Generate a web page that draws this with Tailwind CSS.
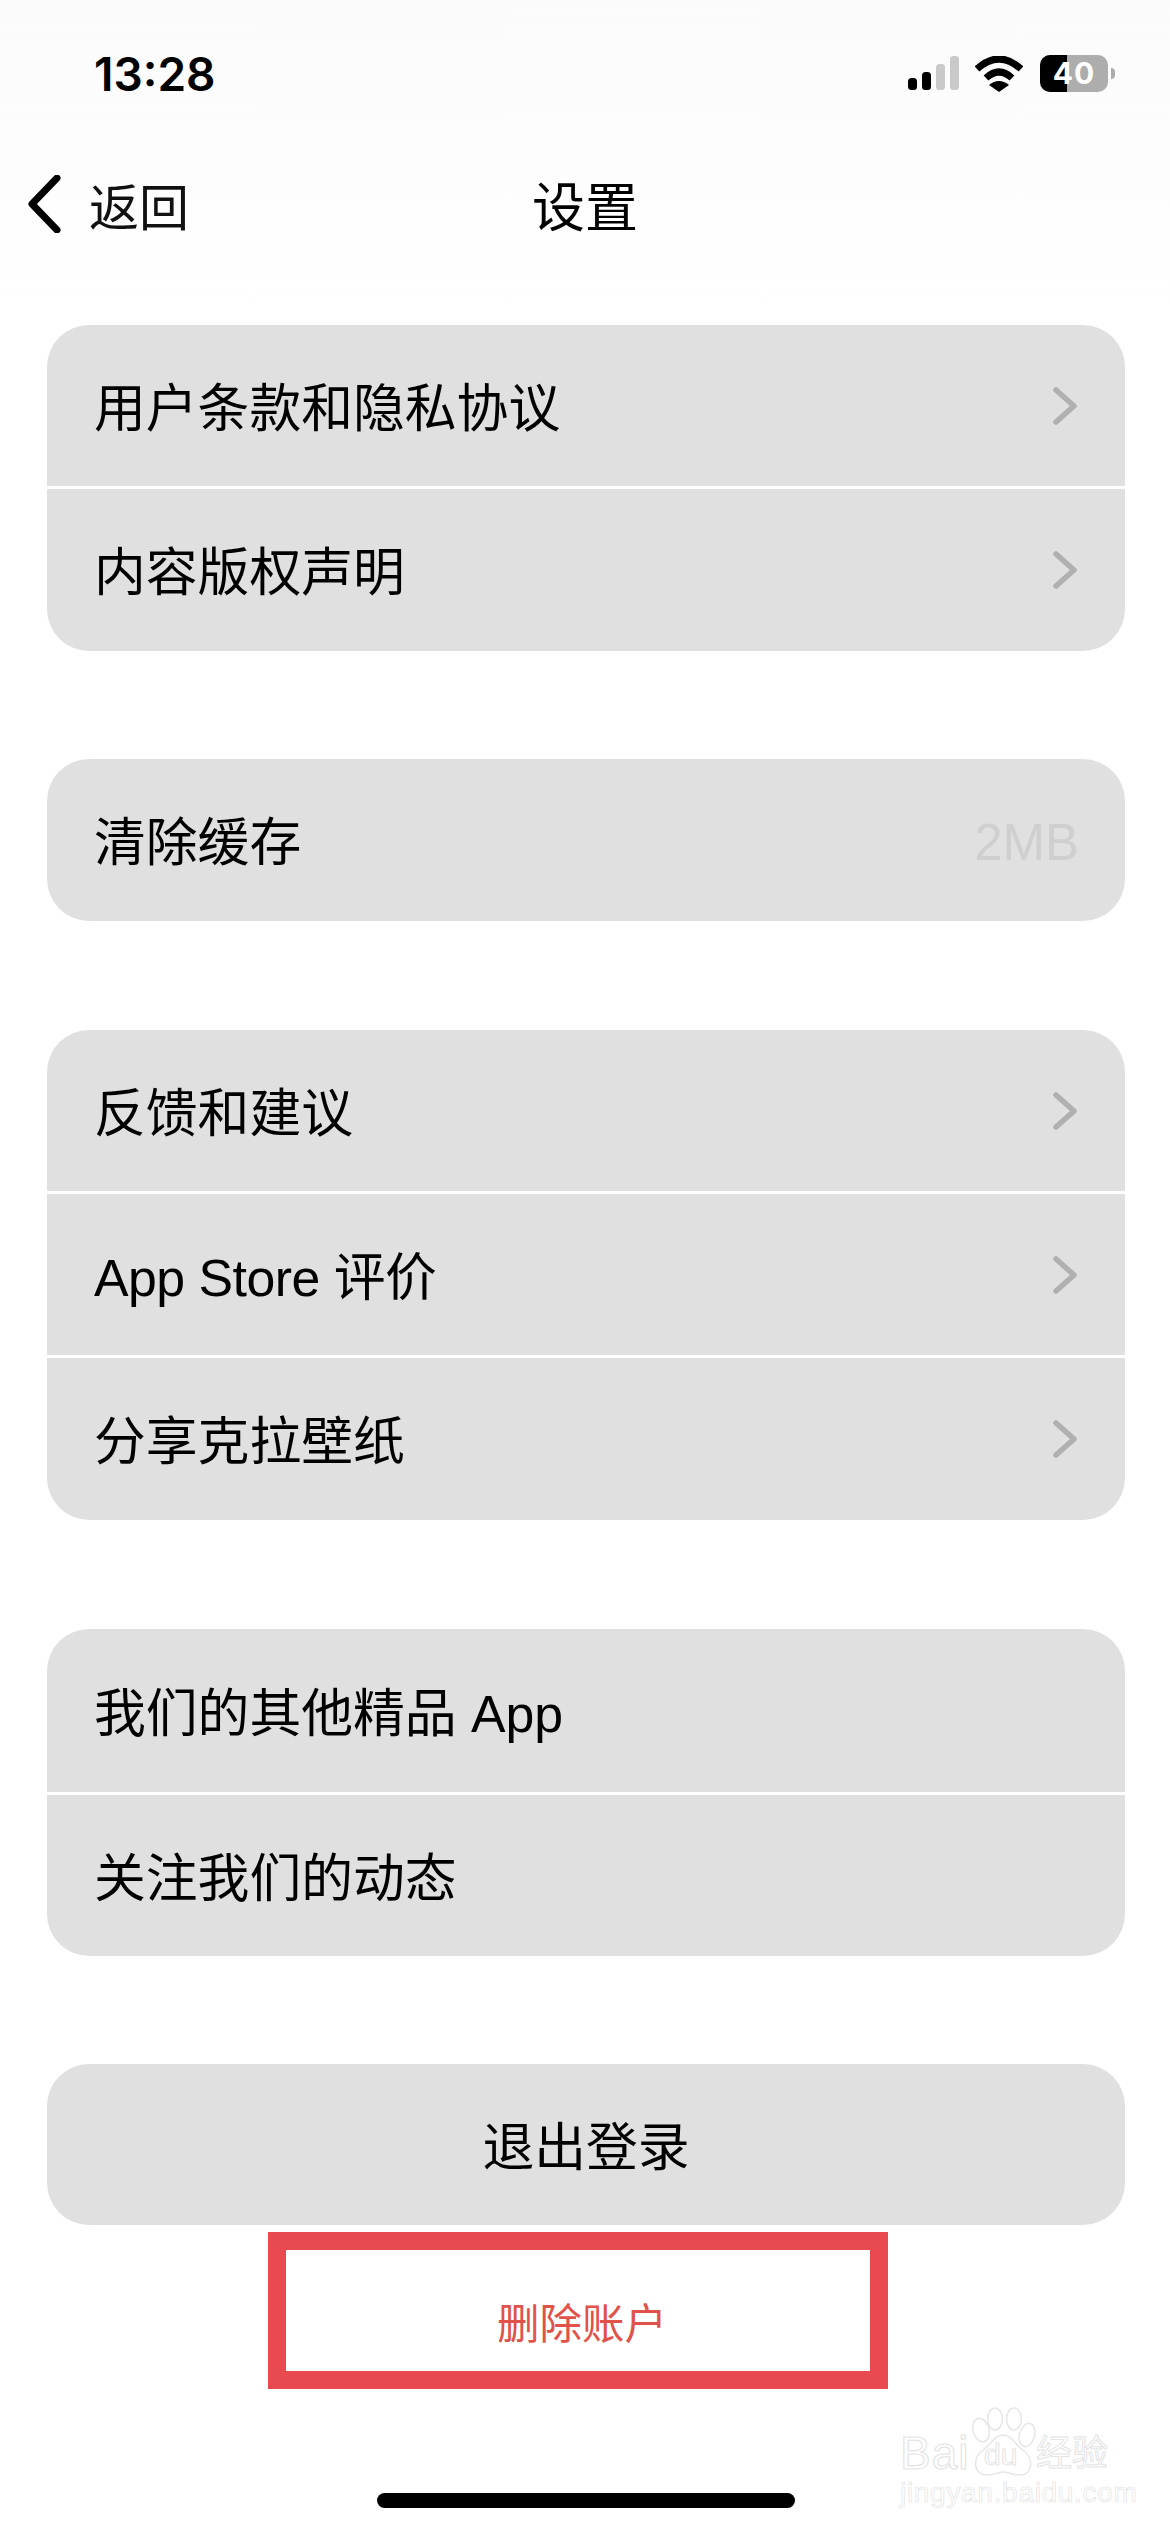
<!doctype html>
<html lang="zh-CN">
<head>
<meta charset="utf-8">
<script src="https://cdn.jsdelivr.net/npm/@tailwindcss/browser@4"></script>
</head>
<body class="bg-white">
<div class="relative w-[1170px] h-[2532px] overflow-hidden bg-white text-black font-['Liberation_Sans','Noto_Sans_CJK_SC',sans-serif]">
  <div class="h-[325px] bg-gradient-to-b from-[#fbfbfb] to-white">
    <div class="h-[147px] pl-[94px] pr-[55px] pt-[47px] flex items-start justify-between">
      <span class="text-[46px] leading-[54px] font-semibold font-['Inter',sans-serif]">13:28</span>
      <div class="flex items-center pt-[8px]">
        <svg width="52" height="36" viewBox="0 0 52 36" class="mr-[16px]">
          <rect x="1" y="22" width="9" height="12" rx="3.5" fill="#000"/>
          <rect x="15" y="16" width="9" height="18" rx="3.5" fill="#000"/>
          <rect x="29" y="8" width="9" height="26" rx="3.5" fill="#c9c9c9"/>
          <rect x="43" y="0" width="9" height="34" rx="3.5" fill="#c9c9c9"/>
        </svg>
        <svg width="48" height="36" viewBox="0 0 48 36" class="mr-[17px]">
          <path d="M2 13 Q24 -7 46 13" fill="none" stroke="#000" stroke-width="7"/>
          <path d="M11 22 Q24 10 37 22" fill="none" stroke="#000" stroke-width="7"/>
          <path d="M24 36 L14 29 Q24 21 34 29 Z" fill="#000"/>
        </svg>
        <div class="relative w-[68px] h-[37px] rounded-[10px] overflow-hidden bg-[#adadad] flex items-center justify-center">
          <div class="absolute left-0 top-0 bottom-0 w-[27px] bg-black"></div>
          <span class="relative text-white text-[30px] leading-[37px] font-bold tracking-[1px] font-['Inter',sans-serif]">40</span>
        </div>
        <div class="ml-[3px] w-[4px] h-[11px] rounded-r-[4px] bg-[#adadad]"></div>
      </div>
    </div>
    <div class="relative h-[114px] flex items-center">
      <div class="flex items-center pl-[27px]">
        <svg width="34" height="58" viewBox="0 0 34 58" fill="none">
          <path d="M30 3 L5 29 L30 55" stroke="#000" stroke-width="7" stroke-linecap="round" stroke-linejoin="round"/>
        </svg>
        <span class="ml-[28px] pt-[9px] text-[50px] leading-[56px] text-[#111]">返回</span>
      </div>
      <span class="absolute left-0 right-0 pt-[9px] text-center text-[53px] leading-[60px]">设置</span>
    </div>
  </div>

  <div class="ml-[47px] w-[1078px] flex flex-col">
    <div class="rounded-[42px] overflow-hidden bg-white flex flex-col gap-[3px]">
      <div class="h-[161px] bg-[#e0e0e0] pl-[47px] pr-[46px] pt-[6px] flex items-center justify-between">
        <span class="text-[51.8px] leading-[60px]">用户条款和隐私协议</span>
        <svg width="24" height="38" viewBox="0 0 24 38" fill="none" class="-mt-[6px] mr-[2px]"><path d="M3 3 L21 19 L3 35" stroke="#b0b0b0" stroke-width="5.5" stroke-linecap="round" stroke-linejoin="round"/></svg>
      </div>
      <div class="h-[162px] bg-[#e0e0e0] pl-[47px] pr-[46px] pt-[6px] flex items-center justify-between">
        <span class="text-[51.8px] leading-[60px]">内容版权声明</span>
        <svg width="24" height="38" viewBox="0 0 24 38" fill="none" class="-mt-[6px] mr-[2px]"><path d="M3 3 L21 19 L3 35" stroke="#b0b0b0" stroke-width="5.5" stroke-linecap="round" stroke-linejoin="round"/></svg>
      </div>
    </div>

    <div class="mt-[108px] h-[162px] rounded-[42px] bg-[#e0e0e0] pl-[47px] pr-[46px] pt-[6px] flex items-center justify-between">
      <span class="text-[51.8px] leading-[60px]">清除缓存</span>
      <span class="text-[51px] leading-[60px] text-[#cfcfcf]">2MB</span>
    </div>

    <div class="mt-[109px] rounded-[42px] overflow-hidden bg-white flex flex-col gap-[3px]">
      <div class="h-[161px] bg-[#e0e0e0] pl-[47px] pr-[46px] pt-[6px] flex items-center justify-between">
        <span class="text-[51.8px] leading-[60px]">反馈和建议</span>
        <svg width="24" height="38" viewBox="0 0 24 38" fill="none" class="-mt-[6px] mr-[2px]"><path d="M3 3 L21 19 L3 35" stroke="#b0b0b0" stroke-width="5.5" stroke-linecap="round" stroke-linejoin="round"/></svg>
      </div>
      <div class="h-[161px] bg-[#e0e0e0] pl-[47px] pr-[46px] pt-[6px] flex items-center justify-between">
        <span class="text-[51.8px] leading-[60px] tracking-[-0.5px]">App Store 评价</span>
        <svg width="24" height="38" viewBox="0 0 24 38" fill="none" class="-mt-[6px] mr-[2px]"><path d="M3 3 L21 19 L3 35" stroke="#b0b0b0" stroke-width="5.5" stroke-linecap="round" stroke-linejoin="round"/></svg>
      </div>
      <div class="h-[162px] bg-[#e0e0e0] pl-[47px] pr-[46px] pt-[6px] flex items-center justify-between">
        <span class="text-[51.8px] leading-[60px]">分享克拉壁纸</span>
        <svg width="24" height="38" viewBox="0 0 24 38" fill="none" class="-mt-[6px] mr-[2px]"><path d="M3 3 L21 19 L3 35" stroke="#b0b0b0" stroke-width="5.5" stroke-linecap="round" stroke-linejoin="round"/></svg>
      </div>
    </div>

    <div class="mt-[109px] rounded-[42px] overflow-hidden bg-white flex flex-col gap-[3px]">
      <div class="h-[163px] bg-[#e0e0e0] pl-[47px] pt-[6px] flex items-center">
        <span class="text-[51.8px] leading-[60px]">我们的其他精品 App</span>
      </div>
      <div class="h-[161px] bg-[#e0e0e0] pl-[47px] pt-[6px] flex items-center">
        <span class="text-[51.8px] leading-[60px]">关注我们的动态</span>
      </div>
    </div>

    <div class="mt-[108px] h-[161px] rounded-[42px] bg-[#e0e0e0] pt-[6px] flex items-center justify-center">
      <span class="text-[51.8px] leading-[60px]">退出登录</span>
    </div>
  </div>

  <div class="mt-[7px] ml-[268px] w-[620px] h-[157px] border-[18px] border-[#e94a50] flex items-center justify-center pt-[28px] pl-[8px]">
    <span class="text-[42.5px] leading-[50px] text-[#e0524a]">删除账户</span>
  </div>

  <div class="mt-[104px] ml-[377px] w-[418px] h-[15px] rounded-full bg-black"></div>

  <div class="absolute left-[900px] top-[2407px] w-[215px] h-[100px]">
    <svg width="66" height="70" viewBox="0 0 66 70" class="absolute left-[70px] top-0" fill="none" stroke="#e6e6e6" stroke-width="1.5">
      <ellipse cx="11" cy="23" rx="8" ry="12" transform="rotate(-15 11 23)"/>
      <ellipse cx="25" cy="12" rx="7.5" ry="11"/>
      <ellipse cx="44" cy="12" rx="7.5" ry="11"/>
      <ellipse cx="57" cy="28" rx="7.5" ry="12" transform="rotate(15 57 28)"/>
      <path d="M33 28 C24 28 21 38 12 44 C3 50 2 68 18 68 C26 68 28 65 33 65 C38 65 42 68 50 68 C64 68 63 50 54 44 C45 38 42 28 33 28 Z"/>
    </svg>
    <span class="absolute left-0 top-[27px] text-[46px] leading-[38px] tracking-[1px] text-white [-webkit-text-stroke:1.2px_#e4e4e4]">Bai</span>
    <span class="absolute left-[84px] top-[33px] text-[30px] leading-[30px] text-white [-webkit-text-stroke:1px_#e4e4e4]">du</span>
    <span class="absolute left-[136px] top-[28px] text-[36px] leading-[38px] text-white [-webkit-text-stroke:1px_#e4e4e4]">经验</span>
    <span class="absolute left-0 top-[72px] text-[28px] leading-[28px] tracking-[0.7px] text-white [-webkit-text-stroke:0.7px_#e4e4e4]">jingyan.baidu.com</span>
  </div>
</div>
</body>
</html>
